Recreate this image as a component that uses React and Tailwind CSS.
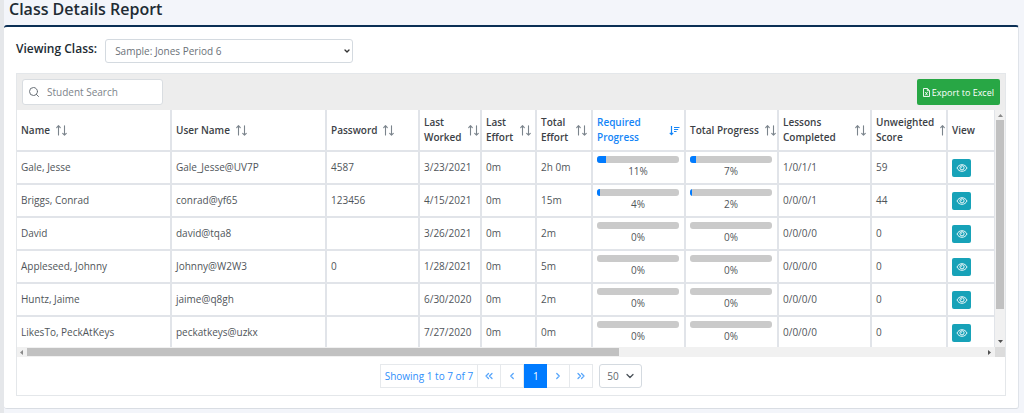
import React from "react";
import { Search, ChevronDown, ChevronLeft, ChevronRight, ChevronsLeft, ChevronsRight } from "lucide-react";

const columns = [
  { label: "Name", width: "w-[155px]", inline: true },
  { label: "User Name", width: "w-[155px]", inline: true },
  { label: "Password", width: "w-[93px]", inline: true },
  { label: "Last Worked", width: "w-[62px]" },
  { label: "Last Effort", width: "w-[55px]" },
  { label: "Total Effort", width: "w-[56px]" },
  { label: "Required Progress", width: "w-[93px]", active: true },
  { label: "Total Progress", width: "w-[93px]", inline: true },
  { label: "Lessons Completed", width: "w-[93px]" },
  { label: "Unweighted Score", width: "w-[76px]" },
  { label: "View", width: "w-[48px]", plain: true },
];

const students = [
  { name: "Gale, Jesse", user: "Gale_Jesse@UV7P", password: "4587", worked: "3/23/2021", last: "0m", total: "2h 0m", required: 11, progress: 7, lessons: "1/0/1/1", score: 59 },
  { name: "Briggs, Conrad", user: "conrad@yf65", password: "123456", worked: "4/15/2021", last: "0m", total: "15m", required: 4, progress: 2, lessons: "0/0/0/1", score: 44 },
  { name: "David", user: "david@tqa8", password: "", worked: "3/26/2021", last: "0m", total: "2m", required: 0, progress: 0, lessons: "0/0/0/0", score: 0 },
  { name: "Appleseed, Johnny", user: "Johnny@W2W3", password: "0", worked: "1/28/2021", last: "0m", total: "5m", required: 0, progress: 0, lessons: "0/0/0/0", score: 0 },
  { name: "Huntz, Jaime", user: "jaime@q8gh", password: "", worked: "6/30/2020", last: "0m", total: "2m", required: 0, progress: 0, lessons: "0/0/0/0", score: 0 },
  { name: "LikesTo, PeckAtKeys", user: "peckatkeys@uzkx", password: "", worked: "7/27/2020", last: "0m", total: "0m", required: 0, progress: 0, lessons: "0/0/0/0", score: 0 },
];

function SortIcon() {
  return (
    <svg className="h-[11px] w-[11px] shrink-0 text-[#7b848c]" viewBox="0 0 11 11" fill="none" stroke="currentColor" strokeWidth="1.1" strokeLinecap="round" strokeLinejoin="round" aria-hidden="true">
      <path d="M2.5 10V.8M.7 2.6l1.8-1.9 1.8 1.9" />
      <path d="M8.500 .8V10M6.700 8.300l1.800 1.900 1.800-1.900" />
    </svg>
  );
}

function SortDownIcon() {
  return (
    <svg className="h-[11px] w-[11px] shrink-0" viewBox="0 0 11 11" fill="none" stroke="currentColor" strokeWidth="1.2" strokeLinejoin="round" aria-hidden="true">
      <path d="M2.500 1v8.500M.800 7.800l1.700 1.900 1.700-1.900" />
      <path d="M5 2.500h5.500M5 4.500h4.200M5 6.500h2.600" />
    </svg>
  );
}

function EyeIcon() {
  return (
    <svg className="h-[10px] w-[12px]" viewBox="0 0 12 10" fill="none" stroke="currentColor" strokeWidth="0.9" aria-hidden="true">
      <path d="M1 5c1-2.1 2.8-3.3 5-3.3S10 2.900 11 5c-1 2.100-2.800 3.300-5 3.300S2 7.100 1 5z" />
      <circle cx="6" cy="4.800" r="2.100" />
      <path d="M5.200 4.600c0-.5.300-.8.800-.8" />
    </svg>
  );
}

function ExcelIcon() {
  return (
    <svg className="h-[9px] w-[7px] shrink-0" viewBox="0 0 7 9" fill="none" stroke="currentColor" strokeWidth="0.9" strokeLinejoin="round" aria-hidden="true">
      <path d="M.5.500h3.900L6.500 2.600v5.900h-6zM4.300.600v2.100h2.100" />
      <path d="M2.300 4l2.300 3.300M4.600 4L2.300 7.300" />
    </svg>
  );
}

function HeaderCell({ column }) {
  const tone = column.active ? "text-[#1485f7]" : "text-[#3c4146]";
  const spread = column.inline || column.plain ? "" : "justify-between";
  return (
    <th scope="col" className="h-[42px] overflow-hidden border-r-2 border-b-2 border-[#e1e4e9] px-1 text-left align-middle font-semibold">
      <div className={`flex items-center gap-1.5 ${spread} ${tone}`}>
        <span className={column.inline ? "whitespace-nowrap" : "w-min shrink-0"}>{column.label}</span>
        {column.active ? <SortDownIcon /> : column.plain ? null : <SortIcon />}
      </div>
    </th>
  );
}

function Cell({ children }) {
  return <td className="h-[33px] border-r-2 border-b-2 border-[#e1e4e9] px-1 align-middle whitespace-nowrap">{children}</td>;
}

function Progress({ value }) {
  return (
    <div className="flex flex-col pr-px">
      <div className="h-[7px] overflow-hidden rounded-[3px] bg-[#cacaca]">
        <div className="h-full bg-[#007bff]" style={{ width: `${value}%` }} />
      </div>
      <span className="text-center leading-4">{value}%</span>
    </div>
  );
}

function PageButton({ label, children }) {
  return (
    <button type="button" aria-label={label} className="flex w-[23px] items-center justify-center border-r border-[#e6e9ec] text-[#58a6fb]">
      {children}
    </button>
  );
}

function Arrow({ points }) {
  return (
    <svg className="h-[3px] w-[5px]" viewBox="0 0 5 3" fill="currentColor" aria-hidden="true">
      <polygon points={points} />
    </svg>
  );
}

export default function App() {
  return (
    <div className="min-h-screen border-l-4 border-[#e5e7ea] bg-[#f3f5fa] pr-[5px] pb-1 font-['Open_Sans','Noto_Sans',sans-serif] text-[10px] leading-[15px] text-[#50555a]">
      <h1 className="flex h-[25px] items-start pl-[5px] text-base leading-[18px] font-semibold text-[#212b33]">Class Details Report</h1>
      <main className="rounded-[3px] border-t-2 border-r border-b border-t-[#0b2f55] border-r-[#dfe3e9] border-b-[#d9dde3] bg-white px-3 pt-3 pb-3">
        <div className="mb-2.5 flex items-center">
          <label htmlFor="class-select" className="mr-2 pb-1 text-xs font-semibold text-[#212b33]">Viewing Class:</label>
          <div className="relative w-[248px]">
            <select id="class-select" className="h-6 w-full appearance-none rounded-[3px] border border-[#d4dae0] bg-white pr-6 pl-[9px] text-[10px] text-[#6a7178]">
              <option>Sample: Jones Period 6</option>
            </select>
            <ChevronDown className="pointer-events-none absolute top-2 right-0.5 h-2 w-2 text-[#333]" strokeWidth={4} />
          </div>
        </div>

        <section className="border border-[#e4e7ea]">
          <div className="flex h-9 items-center justify-between bg-[#ededed] px-[5px]">
            <div className="flex h-[26px] w-[141px] items-center gap-[7px] rounded-[3px] border border-[#d9dde1] bg-white px-[5px]">
              <Search className="h-3 w-3 shrink-0 text-[#6a7178]" strokeWidth={2} />
              <input aria-label="Student Search" placeholder="Student Search" className="w-full min-w-0 bg-transparent text-[10px] outline-none placeholder:text-[#7c838a]" />
            </div>
            <button type="button" className="flex h-[26px] items-center gap-0.5 rounded-[2px] bg-[#28a745] px-1.5 text-[9px] font-medium whitespace-nowrap text-white">
              <ExcelIcon />
              Export to Excel
            </button>
          </div>

          <div className="flex h-[237px]">
            <div className="min-w-0 flex-1 overflow-hidden">
              <table className="w-full table-fixed border-separate border-spacing-0">
                <colgroup>
                  {columns.map((column) => <col key={column.label} className={column.width} />)}
                </colgroup>
                <thead>
                  <tr>{columns.map((column) => <HeaderCell key={column.label} column={column} />)}</tr>
                </thead>
                <tbody>
                  {students.map((s) => (
                    <tr key={s.user}>
                      <Cell>{s.name}</Cell>
                      <Cell>{s.user}</Cell>
                      <Cell>{s.password}</Cell>
                      <Cell>{s.worked}</Cell>
                      <Cell>{s.last}</Cell>
                      <Cell>{s.total}</Cell>
                      <Cell><Progress value={s.required} /></Cell>
                      <Cell><Progress value={s.progress} /></Cell>
                      <Cell>{s.lessons}</Cell>
                      <Cell>{s.score}</Cell>
                      <Cell>
                        <button type="button" aria-label={`View ${s.name}`} className="flex h-[18px] w-[19px] items-center justify-center rounded-[2px] bg-[#17a2b8] text-white">
                          <EyeIcon />
                        </button>
                      </Cell>
                    </tr>
                  ))}
                </tbody>
              </table>
            </div>
            <div className="flex w-[10px] flex-col items-center bg-[#f1f1f1] py-1 text-[#505050]" aria-hidden="true">
              <span className="flex text-[#8a8a8a]"><Arrow points="0,3 2.5,0 5,3" /></span>
              <div className="mt-[3px] h-[189px] w-2 bg-[#c1c1c1]" />
              <span className="mt-auto flex"><Arrow points="0,0 5,0 2.5,3" /></span>
            </div>
          </div>

          <div className="flex h-[10px] bg-[#f1f1f1] text-[#505050]" aria-hidden="true">
            <div className="flex flex-1 items-center justify-between pr-1 pl-[3px]">
              <svg className="h-[5px] w-[3px] text-[#8a8a8a]" viewBox="0 0 3 5" fill="currentColor"><polygon points="3,0 0,2.5 3,5" /></svg>
              <div className="mr-auto ml-1 h-2 w-[61%] bg-[#c1c1c1]" />
              <svg className="h-[5px] w-[3px]" viewBox="0 0 3 5" fill="currentColor"><polygon points="0,0 3,2.5 0,5" /></svg>
            </div>
            <div className="w-[10px] bg-[#dcdcdc]" />
          </div>

          <nav aria-label="Pagination" className="flex h-[38px] items-center justify-center gap-1.5">
            <div className="flex h-6 border border-r-0 border-[#e6e9ec]">
              <span className="flex items-center border-r border-[#e6e9ec] px-1 whitespace-nowrap text-[#2f8ffb]">Showing 1 to 7 of 7</span>
              <PageButton label="First page"><ChevronsLeft className="h-3 w-3" strokeWidth={2.5} /></PageButton>
              <PageButton label="Previous page"><ChevronLeft className="h-2.5 w-2.5" strokeWidth={3} /></PageButton>
              <button type="button" aria-current="page" className="-my-px w-[23px] bg-[#007bff] text-white">1</button>
              <PageButton label="Next page"><ChevronRight className="h-2.5 w-2.5" strokeWidth={3} /></PageButton>
              <PageButton label="Last page"><ChevronsRight className="h-3 w-3" strokeWidth={2.5} /></PageButton>
            </div>
            <div className="relative">
              <select aria-label="Rows per page" className="h-6 w-[43px] appearance-none rounded-[3px] border border-[#d4dae0] bg-white pl-[7px] text-[10px] text-[#5f666d]">
                <option>50</option>
              </select>
              <ChevronDown className="pointer-events-none absolute top-1.5 right-1.5 h-3 w-3 text-[#495057]" strokeWidth={2.5} />
            </div>
          </nav>
        </section>
      </main>
    </div>
  );
}
